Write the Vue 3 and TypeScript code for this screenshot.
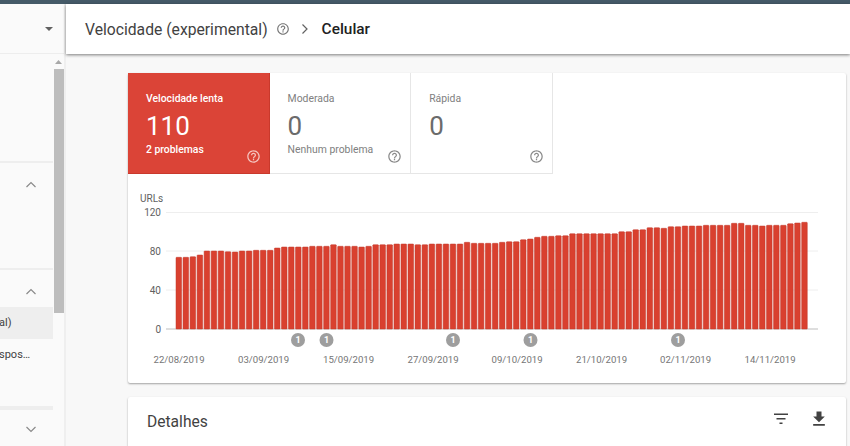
<template>
  <div class="page">
    <div class="top-strip"></div>
    <div class="shell">
      <aside class="sidebar">
        <div class="property">
          <svg class="caret" width="8" height="4" viewBox="0 0 8 4"><path d="M0 0h8L4 4z" fill="#616161" /></svg>
        </div>
        <div class="side-scroll">
          <div class="side-nav">
            <div class="side-group first"></div>
            <div class="side-group second">
              <svg class="chev" width="12" height="7" viewBox="0 0 12 7"><path d="M1.5 6L6 1.5 10.500 6" /></svg>
            </div>
            <div class="side-group third">
              <svg class="chev" width="12" height="7" viewBox="0 0 12 7"><path d="M1.5 6L6 1.5 10.500 6" /></svg>
              <div class="side-item active">al)</div>
              <div class="side-item">spos…</div>
            </div>
            <div class="side-group fourth">
              <svg class="chev" width="12" height="7" viewBox="0 0 12 7"><path d="M1.5 1L6 5.500 10.500 1" /></svg>
            </div>
          </div>
          <div class="scrollbar">
            <svg class="scroll-up" width="7" height="4" viewBox="0 0 7 4"><path d="M0 4L3.500 0 7 4z" fill="#a8a8a8" /></svg>
            <div class="thumb"></div>
          </div>
        </div>
      </aside>

      <div class="content">
        <header class="page-head">
          <span class="crumb">Velocidade (experimental)</span>
          <svg class="help head-help" width="14" height="14" viewBox="0 0 24 24"><use href="#help-glyph" /></svg>
          <svg class="crumb-sep" width="8" height="12" viewBox="0 0 8 12"><path d="M1.5 1.500L6 6l-4.500 4.500" /></svg>
          <span class="crumb-current">Celular</span>
        </header>

        <main class="body">
          <section class="card summary">
            <div class="tabs">
              <div v-for="tab in tabs" :key="tab.label" class="tab" :class="{ selected: tab.selected }">
                <div class="tab-label">{{ tab.label }}</div>
                <div class="tab-value">{{ tab.value }}</div>
                <div class="tab-note">{{ tab.note }}</div>
                <svg class="help tab-help" width="15" height="15" viewBox="0 0 24 24"><use href="#help-glyph" /></svg>
              </div>
            </div>

            <svg class="chart" width="718" height="209" viewBox="128 174 718 209">
              <text x="140" y="202" class="axis-title">URLs</text>
              <g v-for="tick in ticks" :key="tick.label">
                <line x1="166" x2="818" :y1="tick.y" :y2="tick.y" :class="tick.label === '0' ? 'baseline' : 'grid'" />
                <text x="161" :y="tick.y + 3.5" text-anchor="end" class="axis-label">{{ tick.label }}</text>
              </g>
              <rect
                v-for="bar in bars"
                :key="bar.x"
                :x="bar.x"
                :y="bar.y"
                width="5.6"
                :height="bar.h"
                rx="0.6"
                class="bar"
              />
              <g v-for="m in markers" :key="m">
                <circle :cx="m" cy="340" r="7" fill="#9e9e9e" />
                <text :x="m" y="343" text-anchor="middle" class="marker-text">1</text>
              </g>
              <text v-for="d in dates" :key="d.label" :x="d.x" y="363" class="date">{{ d.label }}</text>
            </svg>
          </section>

          <section class="card details">
            <h2 class="details-title">Detalhes</h2>
            <div class="details-actions">
              <svg width="20" height="20" viewBox="0 0 20 20"><path d="M3 4.500h14V6H3zM5.500 9h9v1.500h-9zM8.500 13.500h3V15h-3z" fill="#424242" /></svg>
              <svg width="20" height="20" viewBox="0 0 24 24"><path d="M19 9h-4V3H9v6H5l7 7 7-7zM5 18v2h14v-2H5z" fill="#424242" /></svg>
            </div>
          </section>
        </main>
      </div>
    </div>

    <svg width="0" height="0" class="defs">
      <defs>
        <g id="help-glyph">
          <path d="M11 18h2v-2h-2v2zm1-16C6.480 2 2 6.480 2 12s4.480 10 10 10 10-4.480 10-10S17.520 2 12 2zm0 18c-4.410 0-8-3.590-8-8s3.590-8 8-8 8 3.590 8 8-3.590 8-8 8zm0-14c-2.210 0-4 1.790-4 4h2c0-1.100.900-2 2-2s2 .900 2 2c0 2-3 1.750-3 5h2c0-2.250 3-2.500 3-5 0-2.210-1.790-4-4-4z" />
        </g>
      </defs>
    </svg>
  </div>
</template>

<script setup lang="ts">
interface Tab {
  label: string
  value: string
  note: string
  selected?: boolean
}

const tabs: Tab[] = [
  { label: 'Velocidade lenta', value: '110', note: '2 problemas', selected: true },
  { label: 'Moderada', value: '0', note: 'Nenhum problema' },
  { label: 'Rápida', value: '0', note: '' }
]

const ticks = [
  { label: '120', y: 212.5 },
  { label: '80', y: 251 },
  { label: '40', y: 290 },
  { label: '0', y: 329 }
]

// bar heights in px, read off the reference
const heights = [
  71.7, 71.7, 72.3, 74, 78, 78, 78, 77.3, 77, 78, 78, 78.7, 78.7, 78.7, 81, 82, 82, 82, 82, 82.7, 82.7, 82.7,
  84.3, 82.7, 82.7, 82.7, 82, 82.7, 84.3, 84.3, 84.3, 85, 85, 85, 84.3, 84.3, 85, 85, 85, 85, 85, 86.7, 85.7,
  85.7, 85.7, 85.7, 86.7, 87.3, 87.3, 89.3, 90, 91.7, 92.7, 92.7, 93.3, 93.3, 95.3, 95.3, 95.3, 95.3, 95.3,
  95.3, 95.3, 97.3, 97.3, 99.3, 99.3, 101.3, 101.3, 100.7, 102.3, 102.3, 103, 103, 103, 103.7, 103.7, 103.7,
  103.7, 105.7, 105.7, 103.7, 103.7, 103, 103.7, 103.7, 103.7, 105.3, 106, 106.7
]

const bars = heights.map((h, i) => ({
  x: 176 + i * 7.03,
  y: 329 - h,
  h
}))

const markers = [298, 326.5, 453, 530.5, 678]

const dates = [
  { label: '22/08/2019', x: 153.5 },
  { label: '03/09/2019', x: 238 },
  { label: '15/09/2019', x: 323 },
  { label: '27/09/2019', x: 407.5 },
  { label: '09/10/2019', x: 491.5 },
  { label: '21/10/2019', x: 576 },
  { label: '02/11/2019', x: 660 },
  { label: '14/11/2019', x: 744.5 }
]
</script>

<style>
html,
body {
  margin: 0;
  background: #f8f8f8;
}
</style>

<style scoped>
.page {
  width: 850px;
  height: 446px;
  overflow: hidden;
  display: flex;
  flex-direction: column;
  font-family: Roboto, "Liberation Sans", sans-serif;
  background: #f8f8f8;
}

.top-strip {
  height: 4px;
  flex: none;
  background: #455a68;
}

.shell {
  flex: 1;
  display: flex;
  min-height: 0;
}

.sidebar {
  width: 64px;
  flex: none;
  display: flex;
  flex-direction: column;
  background: #fafafa;
  border-right: 2px solid #efefef;
}

.property {
  height: 50px;
  flex: none;
  display: flex;
  align-items: center;
  justify-content: flex-end;
  padding-right: 11px;
  border-bottom: 1px solid #ededed;
  box-sizing: border-box;
}

.side-scroll {
  flex: 1;
  display: flex;
  min-height: 0;
}

.side-nav {
  flex: 1;
  min-width: 0;
}

.side-group {
  position: relative;
  box-sizing: border-box;
  border-bottom: 2px solid #eeeeee;
}

.first {
  height: 109px;
}

.second {
  height: 107px;
}

.third {
  height: 138px;
  padding-top: 37px;
}

.chev {
  position: absolute;
  left: 25px;
  top: 18px;
  fill: none;
  stroke: #8a8a8a;
  stroke-width: 1.2;
}

.side-item {
  height: 32px;
  line-height: 31px;
  font-size: 11px;
  text-indent: -1px;
  color: #424242;
  white-space: nowrap;
}

.side-item.active {
  background: #eeeeee;
}

.scrollbar {
  width: 11px;
  flex: none;
  display: flex;
  flex-direction: column;
  align-items: center;
  background: #fafafa;
}

.scroll-up {
  margin-top: 6px;
}

.thumb {
  width: 10px;
  height: 244px;
  margin-top: 5px;
  background: #bdbdbd;
}

.content {
  flex: 1;
  min-width: 0;
  display: flex;
  flex-direction: column;
}

.page-head {
  height: 50px;
  flex: none;
  display: flex;
  align-items: center;
  padding-left: 19px;
  background: #ffffff;
  box-shadow: 0 1px 3px rgba(0, 0, 0, 0.5);
  position: relative;
}

.crumb {
  font-size: 15.7px;
  color: #424242;
}

.head-help {
  margin-left: 8px;
}

.crumb-sep {
  margin-left: 11px;
  fill: none;
  stroke: #616161;
  stroke-width: 1.2;
}

.crumb-current {
  margin-left: 13px;
  font-size: 15.4px;
  font-weight: 500;
  color: #212121;
}

.help {
  fill: #757575;
}

.body {
  flex: 1;
  min-height: 0;
  padding: 19px 4px 0 62px;
  display: flex;
  flex-direction: column;
  gap: 14px;
}

.card {
  background: #ffffff;
  border-radius: 2px;
  box-shadow: 0 1px 2px rgba(0, 0, 0, 0.35);
}

.summary {
  height: 310px;
  flex: none;
  display: flex;
  flex-direction: column;
}

.tabs {
  display: flex;
  height: 101px;
  flex: none;
}

.tab {
  position: relative;
  width: 141.6px;
  box-sizing: border-box;
  padding: 19px 0 0 18px;
  border-right: 1px solid #e6e6e6;
  border-bottom: 1px solid #e6e6e6;
  color: #808080;
}

.tab.selected {
  background: #db4437;
  color: #ffffff;
  border-color: #c9392c;
}

.tab-label {
  font-size: 10.4px;
  line-height: 13px;
}

.selected .tab-label,
.selected .tab-note {
  font-weight: 500;
}

.tab-value {
  font-size: 26px;
  line-height: 28px;
  margin-top: 7px;
  color: #6b6b6b;
}

.selected .tab-value {
  color: #ffffff;
}

.tab-note {
  font-size: 10.4px;
  line-height: 13px;
  margin-top: 3px;
}

.tab-help {
  position: absolute;
  right: 8px;
  bottom: 9px;
  fill: #8a8a8a;
}

.selected .tab-help {
  fill: #f5c6c1;
}

.chart {
  display: block;
  flex: none;
}

.axis-title,
.axis-label {
  font-size: 10px;
  fill: #616161;
}

.date {
  font-size: 9.6px;
  fill: #757575;
}

.grid {
  stroke: #eeeeee;
  stroke-width: 1;
}

.baseline {
  stroke: #bdbdbd;
  stroke-width: 1;
}

.bar {
  fill: #d9402f;
  stroke: #c0392b;
  stroke-width: 0.5;
}

.marker-text {
  font-size: 9px;
  font-weight: 700;
  fill: #ffffff;
}

.details {
  flex: none;
  height: 64px;
  display: flex;
  align-items: flex-start;
  justify-content: space-between;
  padding: 12px 17px 0 19px;
  box-sizing: border-box;
}

.details-title {
  margin: 4px 0 0;
  font-size: 15.6px;
  font-weight: 400;
  color: #424242;
}

.details-actions {
  display: flex;
  gap: 18px;
}

.defs {
  position: absolute;
}
</style>
